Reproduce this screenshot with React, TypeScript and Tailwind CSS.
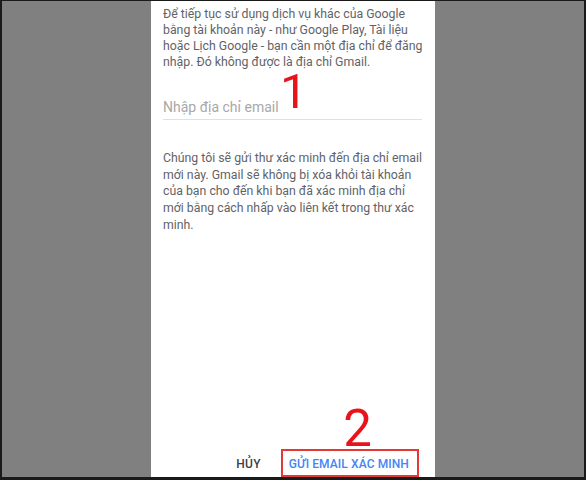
export default function App() {
  return (
    <div className="w-[586px] h-[480px] bg-[#808080] border-t border-l-2 border-r-2 border-b-[3px] border-[#1a1a1a] flex font-['Roboto',sans-serif] overflow-hidden">
      <div className="ml-[149px] w-[284px] h-full bg-white flex flex-col pl-3 pr-[10px] pt-[5px] relative">
        <p className="text-[12.3px] leading-[16px] text-[#5f6368]">
          Để tiếp tục sử dụng dịch vụ khác của Google bằng tài khoản này - như Google Play, Tài liệu hoặc Lịch Google - bạn cần một địa chỉ để đăng nhập. Đó không được là địa chỉ Gmail.
        </p>

        <div className="mt-[25px] mr-[3px] border-b border-[#e0e0e0] relative">
          <span className="text-[14px] leading-[22px] text-[#a8a8a8]">Nhập địa chỉ email</span>
          <span className="absolute left-[117px] top-[-17px] text-[49px] leading-[28px] text-[#e8141c]">1</span>
        </div>

        <p className="mt-[30px] text-[12.3px] leading-[16.7px] text-[#5f6368]">
          Chúng tôi sẽ gửi thư xác minh đến địa chỉ email mới này. Gmail sẽ không bị xóa khỏi tài khoản của bạn cho đến khi bạn đã xác minh địa chỉ mới bằng cách nhấp vào liên kết trong thư xác minh.
        </p>

        <div className="mt-auto mr-[6px] flex items-center justify-end relative">
          <span className="absolute right-[47px] bottom-[30px] text-[51px] leading-[37px] text-[#e8141c]">2</span>
          <span className="text-[12px] font-medium text-[#3c4043] tracking-wide mr-[20px] pt-[2px]">HỦY</span>
          <div className="border-2 border-[#e53935] h-[28px] pl-[6px] pr-[8px] pt-[2px] flex items-center">
            <span className="text-[12px] font-medium text-[#4285f4] tracking-[0.1px]">GỬI EMAIL XÁC MINH</span>
          </div>
        </div>
      </div>
    </div>
  );
}
